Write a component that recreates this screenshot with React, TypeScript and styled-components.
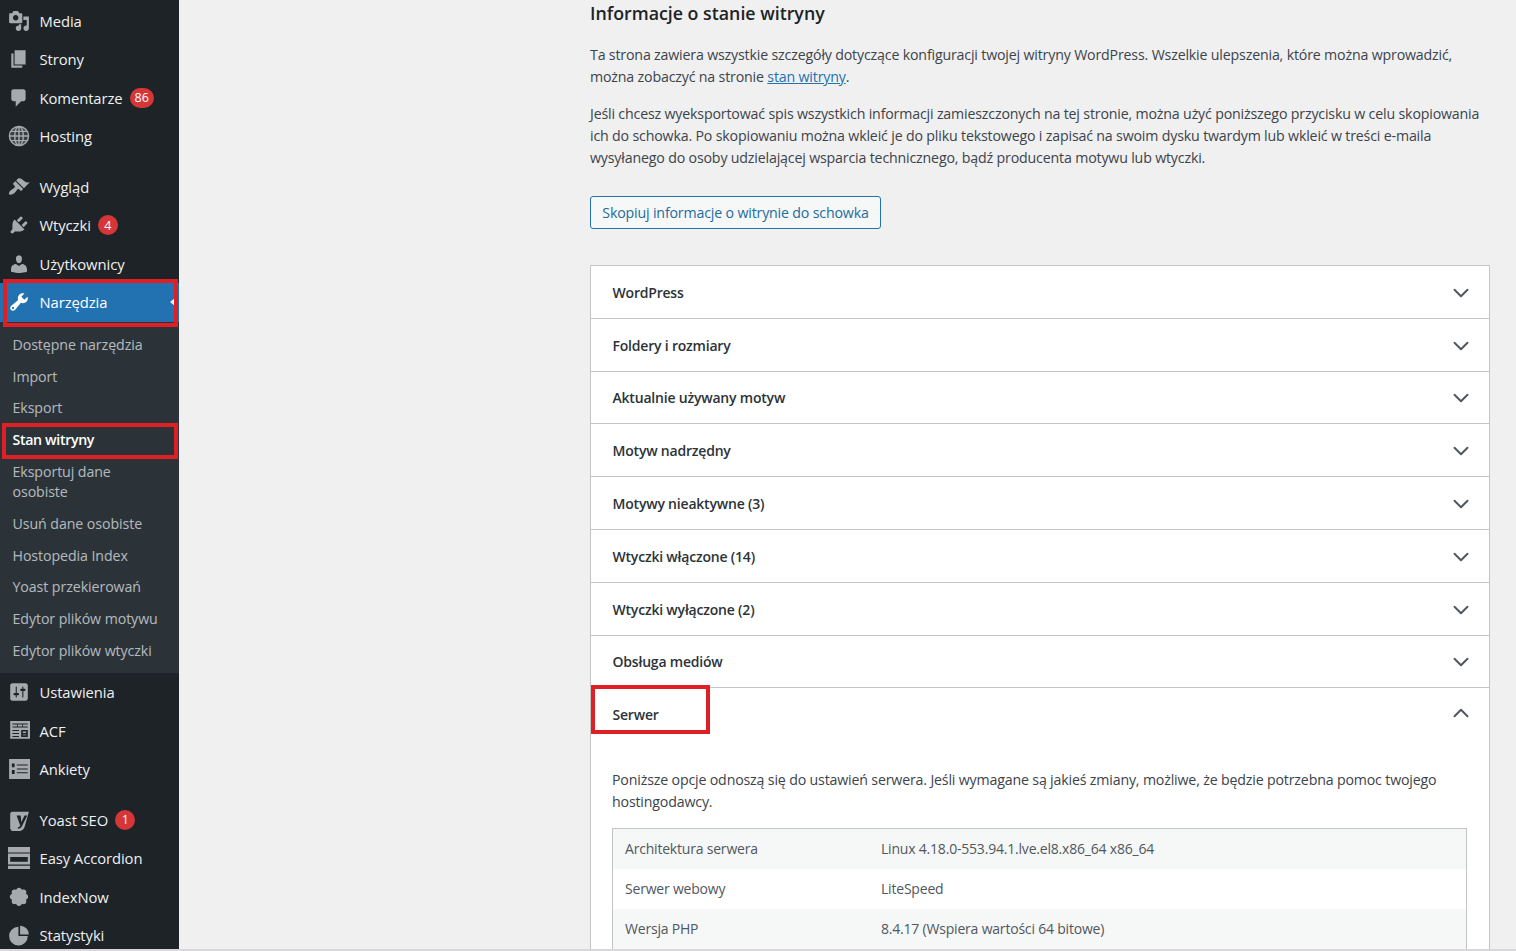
import React from "react";
import styled, { createGlobalStyle } from "styled-components";
import { ChevronDown, ChevronUp } from "lucide-react";

const GlobalStyle = createGlobalStyle`
  html, body {
    margin: 0;
    padding: 0;
    height: 951px;
    overflow: hidden;
    background: #f0f0f1;
  }
  * { box-sizing: border-box; }
`;

const paths: Record<string, string> = {
  media:
    "M13 11V4c0-.55-.45-1-1-1h-1.67L9 1H5L3.67 3H2c-.55 0-1 .45-1 1v7c0 .55.45 1 1 1h10c.55 0 1-.45 1-1zM7 4.5c1.38 0 2.5 1.12 2.5 2.5S8.38 9.5 7 9.5 4.5 8.38 4.5 7 5.62 4.5 7 4.5zM14 6h5v10.5c0 1.38-1.12 2.5-2.5 2.5S14 17.88 14 16.5s1.12-2.5 2.5-2.5c.17 0 .34.02.5.05V9h-3V6zm-4 8.05V13h2v3.5c0 1.38-1.12 2.5-2.5 2.5S7 17.88 7 16.5 8.12 14 9.5 14c.17 0 .34.02.5.05z",
  page: "M6 15V2h10v13H6zm-1 1h8v2H3V5h2v11z",
  comments:
    "M5 2h9c1.1 0 2 .9 2 2v7c0 1.1-.9 2-2 2h-2l-5 5v-5H5c-1.1 0-2-.9-2-2V4c0-1.1.9-2 2-2z",
  appearance:
    "M14.48 11.06L7.41 3.99l1.5-1.5c.5-.56 2.3-.47 3.51.32 1.21.8 1.43 1.28 2.91 2.1 1.18.64 2.45 1.26 4.45.85zm-.71.71L6.7 4.7 4.93 6.47c-.39.39-.39 1.02 0 1.41l1.06 1.06c.39.39.39 1.03 0 1.42-.6.6-1.43 1.11-2.21 1.69-.35.26-.7.53-1.01.84C1.43 13.23.4 15.93 1.2 16.8c.87.8 3.57-.23 4.91-1.57.31-.31.58-.66.84-1.01.58-.78 1.09-1.61 1.69-2.21.39-.39 1.02-.39 1.41 0l1.06 1.06c.39.39 1.02.39 1.41 0z",
  plugins:
    "M13.11 4.36L9.87 7.6 8 5.73l3.24-3.24c.35-.34 1.05-.2 1.56.32.52.51.66 1.21.31 1.55zm-8 1.77l.91-1.12 9.01 9.01-1.19.84c-.71.71-2.63 1.16-3.82 1.16H6.14L4.9 17.26c-.59.59-1.54.59-2.12 0-.59-.58-.59-1.53 0-2.12l1.24-1.24v-3.88c0-1.13.4-3.19 1.09-3.89zm7.26 3.97l3.24-3.24c.34-.35 1.04-.21 1.55.31.52.51.66 1.21.31 1.55l-3.24 3.25z",
  users:
    "M10 9.25c-2.27 0-2.73-3.44-2.73-3.44C7 4.02 7.82 2 9.97 2c2.16 0 2.98 2.02 2.71 3.81 0 0-.41 3.44-2.68 3.44zm0 2.57L12.72 10c2.39 0 4.52 2.33 4.52 4.53v2.49s-3.65 1.13-7.24 1.13c-3.65 0-7.24-1.13-7.24-1.13v-2.49c0-2.25 1.94-4.48 4.47-4.48z",
  tools:
    "M16.68 9.77c-1.34 1.34-3.3 1.67-4.95.99l-5.41 6.52c-.99.99-2.59.99-3.58 0s-.99-2.59 0-3.57l6.52-5.42c-.68-1.65-.35-3.61.99-4.95 1.28-1.28 3.12-1.62 4.72-1.06l-2.89 2.89 2.82 2.82 2.86-2.87c.53 1.58.18 3.39-1.08 4.65zM3.81 16.21c.4.39 1.04.39 1.43 0 .4-.4.4-1.04 0-1.43-.39-.4-1.03-.4-1.43 0-.39.39-.39 1.03 0 1.43z",
  settings:
    "M18 16V4c0-1.1-.9-2-2-2H4c-1.1 0-2 .9-2 2v12c0 1.1.9 2 2 2h12c1.1 0 2-.9 2-2zM8 11h1c.55 0 1 .45 1 1s-.45 1-1 1H8v1.5c0 .28-.22.5-.5.5s-.5-.22-.5-.5V13H6c-.55 0-1-.45-1-1s.45-1 1-1h1V5.5c0-.28.22-.5.5-.5s.5.22.5.5V11zm5-2h-1c-.55 0-1-.45-1-1s.45-1 1-1h1V5.5c0-.28.22-.5.5-.5s.5.22.5.5V7h1c.55 0 1 .45 1 1s-.45 1-1 1h-1v5.5c0 .28-.22.5-.5.5s-.5-.22-.5-.5V9z",
  acf: "M2 1h18v16H2V1zM4 3.200v.8h14v-.8H4zM4 6v.8h14V6H4zm4.300-2v2h.7V4h-.7zm4.700 0v2h.7V4h-.7zM4 9v.9h6V9H4zm0 2.800v.9h6v-.9H4zm0 2.700v.9h6v-.9H4zm8-5.500v6.400h6V9h-6zm1.500 1.500h3v1.400h-3v-1.400zm0 2.700h3v.7h-3v-.7z",
  form: "M1 1h19v18H1V1zm2.500 4v3.500H6V5H3.500zm0 6v3.500H6V11H3.500zM8 6v.9h10V6H8zm0 3.500v.9h10v-.9H8zm0 3.500v.9h10V13H8z",
  yoast:
    "M4 2.500h15l-4 14c-.5 1.500-2 3-4 3.500H3.500L2 18V4.500C2 3.400 2.900 2.500 4 2.500zM7.800 6h3.700l.6 6 2.900-6h2.500l-5 10c-.8 1.500-2 2-3.500 2v-1.500c1 0 1.800-.5 2.200-1.300L7.800 6z",
  accordion:
    "M0 0h20v5H0V0zm0 6h20v10H0V6zm2 3v4.500h16V9H2zM0 17h20v3.500H0V17z",
  flower:
    "M10 1.500c1.400 0 2.300 1 2.700 2 1-.5 2.400-.6 3.300.3s.8 2.300.3 3.300c1 .4 2 1.300 2 2.700s-1 2.300-2 2.700c.5 1 .6 2.400-.3 3.300s-2.300.8-3.300.3c-.4 1-1.300 2-2.700 2s-2.300-1-2.700-2c-1 .5-2.400.6-3.300-.3s-.8-2.300-.3-3.300c-1-.4-2-1.300-2-2.700s1-2.300 2-2.700c-.5-1-.6-2.400.3-3.300s2.300-.8 3.300-.3c.4-1 1.300-2 2.700-2z",
  chart:
    "M9.500 2.500A8.500 8.500 0 1 0 18 11H9.500V2.500zM11 1.500a8 8 0 0 1 8 8h-8v-8z",
};

const Globe = () => (
  <svg viewBox="0 0 20 20" fill="none" stroke="currentColor" strokeWidth="1.3">
    <circle cx="10" cy="10" r="8.700" fill="currentColor" fillOpacity="0.2" />
    <ellipse cx="10" cy="10" rx="3.900" ry="8.700" />
    <path d="M1.500 10h17M2.800 5.800h14.400M2.800 14.200h14.400M10 1.300v17.400" />
  </svg>
);

const Icon = ({ name }: { name: string }) => (
  <IconBox>
    {name === "globe" ? (
      <Globe />
    ) : (
      <svg viewBox="0 0 20 20" fill="currentColor" fillRule="evenodd">
        <path d={paths[name]} />
      </svg>
    )}
  </IconBox>
);

type MenuEntry = { label: string; icon: string; badge?: string; gapBefore?: boolean };

const topMenu: MenuEntry[] = [
  { label: "Media", icon: "media" },
  { label: "Strony", icon: "page" },
  { label: "Komentarze", icon: "comments", badge: "86" },
  { label: "Hosting", icon: "globe" },
  { label: "Wygląd", icon: "appearance", gapBefore: true },
  { label: "Wtyczki", icon: "plugins", badge: "4" },
  { label: "Użytkownicy", icon: "users" },
];

const bottomMenu: MenuEntry[] = [
  { label: "Ustawienia", icon: "settings" },
  { label: "ACF", icon: "acf" },
  { label: "Ankiety", icon: "form" },
  { label: "Yoast SEO", icon: "yoast", badge: "1", gapBefore: true },
  { label: "Easy Accordion", icon: "accordion" },
  { label: "IndexNow", icon: "flower" },
  { label: "Statystyki", icon: "chart" },
];

const subMenu = [
  "Dostępne narzędzia",
  "Import",
  "Eksport",
  "Stan witryny",
  "Eksportuj dane osobiste",
  "Usuń dane osobiste",
  "Hostopedia Index",
  "Yoast przekierowań",
  "Edytor plików motywu",
  "Edytor plików wtyczki",
];

const sections = [
  "WordPress",
  "Foldery i rozmiary",
  "Aktualnie używany motyw",
  "Motyw nadrzędny",
  "Motywy nieaktywne (3)",
  "Wtyczki włączone (14)",
  "Wtyczki wyłączone (2)",
  "Obsługa mediów",
];

const serverRows = [
  ["Architektura serwera", "Linux 4.18.0-553.94.1.lve.el8.x86_64 x86_64"],
  ["Serwer webowy", "LiteSpeed"],
  ["Wersja PHP", "8.4.17 (Wspiera wartości 64 bitowe)"],
];

const MenuRow = ({ entry }: { entry: MenuEntry }) => (
  <MenuItem $gap={entry.gapBefore}>
    <Icon name={entry.icon} />
    <span>{entry.label}</span>
    {entry.badge && <Badge>{entry.badge}</Badge>}
  </MenuItem>
);

export default function App() {
  return (
    <Page>
      <GlobalStyle />
      <Sidebar>
        {topMenu.map((entry) => (
          <MenuRow key={entry.label} entry={entry} />
        ))}
        <CurrentItem>
          <IconBox $white>
            <svg viewBox="0 0 20 20" fill="currentColor" fillRule="evenodd">
              <path d={paths.tools} />
            </svg>
          </IconBox>
          <span>Narzędzia</span>
          <CurrentArrow />
          <Marker $top={-4} $right={1} $bottom={-5} $left={3} />
        </CurrentItem>
        <SubList>
          {subMenu.map((label) =>
            label === "Stan witryny" ? (
              <SubItem key={label} $current>
                {label}
                <Marker $top={-1} $right={1} $bottom={-3} $left={2} />
              </SubItem>
            ) : (
              <SubItem key={label}>{label}</SubItem>
            )
          )}
        </SubList>
        {bottomMenu.map((entry) => (
          <MenuRow key={entry.label} entry={entry} />
        ))}
      </Sidebar>
      <Main>
        <Heading>Informacje o stanie witryny</Heading>
        <Paragraph>
          Ta strona zawiera wszystkie szczegóły dotyczące konfiguracji twojej witryny WordPress. Wszelkie ulepszenia, które można wprowadzić, można zobaczyć na stronie <TextLink>stan witryny</TextLink>.
        </Paragraph>
        <Paragraph>
          Jeśli chcesz wyeksportować spis wszystkich informacji zamieszczonych na tej stronie, można użyć poniższego przycisku w celu skopiowania ich do schowka. Po skopiowaniu można wkleić je do pliku tekstowego i zapisać na swoim dysku twardym lub wkleić w treści e-maila wysyłanego do osoby udzielającej wsparcia technicznego, bądź producenta motywu lub wtyczki.
        </Paragraph>
        <CopyButton>Skopiuj informacje o witrynie do schowka</CopyButton>
        <Accordion>
          {sections.map((title) => (
            <SectionRow key={title}>
              {title}
              <ChevronDown size={26} strokeWidth={1.8} />
            </SectionRow>
          ))}
          <LastSectionRow>
            Serwer
            <ChevronUp size={26} strokeWidth={1.8} />
            <Marker $top={-3} $left={0} $width={119} $height={49} />
          </LastSectionRow>
          <Panel>
            <PanelText>
              Poniższe opcje odnoszą się do ustawień serwera. Jeśli wymagane są jakieś zmiany, możliwe, że będzie potrzebna pomoc twojego hostingodawcy.
            </PanelText>
            <InfoTable>
              {serverRows.map(([name, value]) => (
                <InfoRow key={name}>
                  <span>{name}</span>
                  <span>{value}</span>
                </InfoRow>
              ))}
            </InfoTable>
          </Panel>
        </Accordion>
      </Main>
    </Page>
  );
}

const font = `"Open Sans", "Noto Sans", "Liberation Sans", sans-serif`;

const Page = styled.div`
  display: flex;
  height: 949px;
  overflow: hidden;
  background: #f0f0f1;
  font-family: ${font};
  box-shadow: 0 2px 0 #d9d6de;
`;

const Sidebar = styled.nav`
  flex: 0 0 179px;
  height: 949px;
  padding-top: 1.5px;
  background: #1d2327;
  color: #f0f0f1;
  font-size: 14.8px;
  letter-spacing: -0.08px;
`;

const MenuItem = styled.div<{ $gap?: boolean }>`
  display: flex;
  align-items: center;
  height: 38.5px;
  margin-top: ${(p) => (p.$gap ? "12px" : "0")};
  padding-left: 8px;
`;

const CurrentItem = styled(MenuItem)`
  position: relative;
  background: #2271b1;
  color: #fff;
`;

const CurrentArrow = styled.i`
  position: absolute;
  right: 4px;
  top: 15px;
  border: 4px solid transparent;
  border-left-width: 0;
  border-right: 5px solid #f0f0f1;
`;

const IconBox = styled.span<{ $white?: boolean }>`
  display: flex;
  flex: 0 0 22px;
  width: 22px;
  height: 22px;
  margin-right: 9.5px;
  color: ${(p) => (p.$white ? "#fff" : "#a7aaad")};
  svg {
    width: 100%;
    height: 100%;
  }
`;

const Badge = styled.b`
  display: inline-flex;
  align-items: center;
  justify-content: center;
  min-width: 20px;
  height: 20px;
  margin-left: 7px;
  padding: 0 5px;
  border-radius: 10px;
  background: #d63638;
  color: #fff;
  font-size: 12.5px;
  font-weight: 400;
  letter-spacing: 0;
`;

const SubList = styled.div`
  padding: 7.5px 0 6px;
  background: #2c3338;
`;

const SubItem = styled.div<{ $current?: boolean }>`
  position: relative;
  padding: 5.9px 17px 5.9px 12.5px;
  line-height: 20px;
  font-size: 14.2px;
  letter-spacing: ${(p) => (p.$current ? "-0.35px" : "-0.08px")};
  color: ${(p) => (p.$current ? "#fff" : "rgba(240, 246, 252, 0.7)")};
  font-weight: ${(p) => (p.$current ? 600 : 400)};
`;

const Marker = styled.i<{
  $top?: number;
  $right?: number;
  $bottom?: number;
  $left?: number;
  $width?: number;
  $height?: number;
}>`
  position: absolute;
  top: ${(p) => p.$top ?? 0}px;
  left: ${(p) => p.$left ?? 0}px;
  ${(p) => (p.$right !== undefined ? `right: ${p.$right}px;` : "")}
  ${(p) => (p.$bottom !== undefined ? `bottom: ${p.$bottom}px;` : "")}
  ${(p) => (p.$width !== undefined ? `width: ${p.$width}px;` : "")}
  ${(p) => (p.$height !== undefined ? `height: ${p.$height}px;` : "")}
  border: 4px solid #df1f26;
`;

const Main = styled.main`
  flex: 0 0 900px;
  margin-left: 411px;
  color: #3c434a;
  font-size: 14.2px;
  letter-spacing: -0.17px;
`;

const Heading = styled.h2`
  margin: 0 0 17px;
  height: 27px;
  color: #1d2327;
  font-size: 17.8px;
  line-height: 27px;
  font-weight: 600;
  letter-spacing: 0;
`;

const Paragraph = styled.p`
  margin: 0 0 15px;
  line-height: 22px;
`;

const TextLink = styled.a`
  color: #2271b1;
  text-decoration: underline;
`;

const CopyButton = styled.button`
  display: block;
  width: 291px;
  height: 33px;
  margin: 27px 0 36px;
  padding: 0;
  border: 1px solid #2271b1;
  border-radius: 3px;
  background: #f6f7f7;
  color: #226c9f;
  font: inherit;
  letter-spacing: inherit;
`;

const Accordion = styled.section`
  border: 1px solid #c3c4c7;
  border-bottom: 0;
  background: #fff;
`;

const SectionRow = styled.div`
  position: relative;
  display: flex;
  align-items: center;
  justify-content: space-between;
  height: 52.8px;
  padding: 1px 15.5px 0 21.5px;
  border-bottom: 1px solid #c3c4c7;
  color: #2c3338;
  font-size: 14px;
  font-weight: 600;
  letter-spacing: -0.2px;
  svg {
    margin-top: 1px;
    color: #50575e;
  }
`;

const LastSectionRow = styled(SectionRow)`
  height: 52px;
  padding-top: 0;
  border-bottom: 0;
  svg {
    margin-top: -2px;
  }
`;

const Panel = styled.div`
  padding: 29px 22px 0 21px;
`;

const PanelText = styled.p`
  margin: 0 0 14.5px;
  line-height: 22px;
`;

const InfoTable = styled.div`
  border: 1px solid #c3c4c7;
`;

const InfoRow = styled.div`
  display: grid;
  grid-template-columns: 256px 1fr;
  align-items: center;
  height: 40px;
  padding-left: 12px;
  color: #50575e;
  font-size: 14px;
  letter-spacing: -0.2px;
  &:nth-child(odd) {
    background: #f6f7f7;
  }
`;
